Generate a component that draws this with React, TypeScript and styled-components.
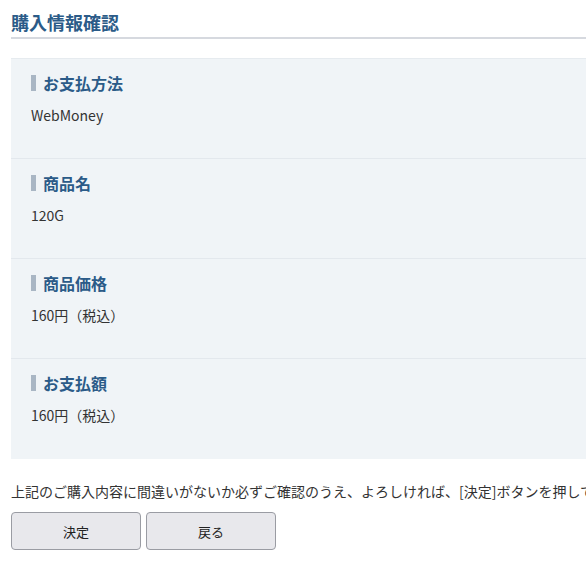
import React from "react";
import styled, { createGlobalStyle } from "styled-components";

const GlobalStyle = createGlobalStyle`
  html, body {
    margin: 0;
    padding: 0;
    overflow: hidden;
    background: #fff;
  }
  body {
    font-family: "Noto Sans CJK JP", "Noto Sans", sans-serif;
    color: #333;
  }
`;

const Page = styled.div`
  width: 900px;
  padding: 0 0 0 11px;
`;

const Title = styled.h2`
  margin: 0;
  padding: 11px 0 4px;
  font-size: 18px;
  line-height: 22px;
  font-weight: bold;
  color: #2b5b88;
  border-bottom: 2px solid #d6d9df;
`;

const InfoList = styled.dl`
  margin: 19px 0 0;
  background: #f0f4f7;
  border-top: 1px solid #e6ebef;
`;

const Item = styled.div`
  height: 100px;
  box-sizing: border-box;
  padding: 13px 20px 0;
  border-bottom: 1px solid #e3e8ed;
  &:last-child {
    border-bottom: none;
  }
`;

const Label = styled.dt`
  display: flex;
  align-items: center;
  gap: 7px;
  font-size: 16px;
  line-height: 22px;
  font-weight: bold;
  color: #2b5b88;
  &::before {
    content: "";
    display: block;
    width: 5px;
    height: 16px;
    background: #a9b6c4;
  }
`;

const Value = styled.dd`
  margin: 11px 0 0;
  font-size: 14px;
  line-height: 20px;
  color: #333;
`;

const Note = styled.p`
  margin: 23px 0 0;
  font-size: 14px;
  line-height: 18px;
  color: #333;
  white-space: nowrap;
`;

const Buttons = styled.div`
  display: flex;
  gap: 5px;
  margin-top: 12px;
`;

const Button = styled.button`
  width: 130px;
  height: 38px;
  border: 1px solid #9a9ca3;
  border-radius: 4px;
  background: #e8e8ec;
  color: #222;
  font-family: inherit;
  font-size: 13px;
  cursor: pointer;
  &:hover {
    background: #dcdce2;
  }
`;

const items = [
  { label: "お支払方法", value: "WebMoney" },
  { label: "商品名", value: "120G" },
  { label: "商品価格", value: "160円（税込）" },
  { label: "お支払額", value: "160円（税込）" },
];

const App = () => {
  return (
    <>
      <GlobalStyle />
      <Page>
        <Title>購入情報確認</Title>
        <InfoList>
          {items.map((item) => (
            <Item key={item.label}>
              <Label>{item.label}</Label>
              <Value>{item.value}</Value>
            </Item>
          ))}
        </InfoList>
        <Note>
          上記のご購入内容に間違いがないか必ずご確認のうえ、よろしければ、[決定]ボタンを押してください。
        </Note>
        <Buttons>
          <Button type="button">決定</Button>
          <Button type="button">戻る</Button>
        </Buttons>
      </Page>
    </>
  );
};

export default App;
